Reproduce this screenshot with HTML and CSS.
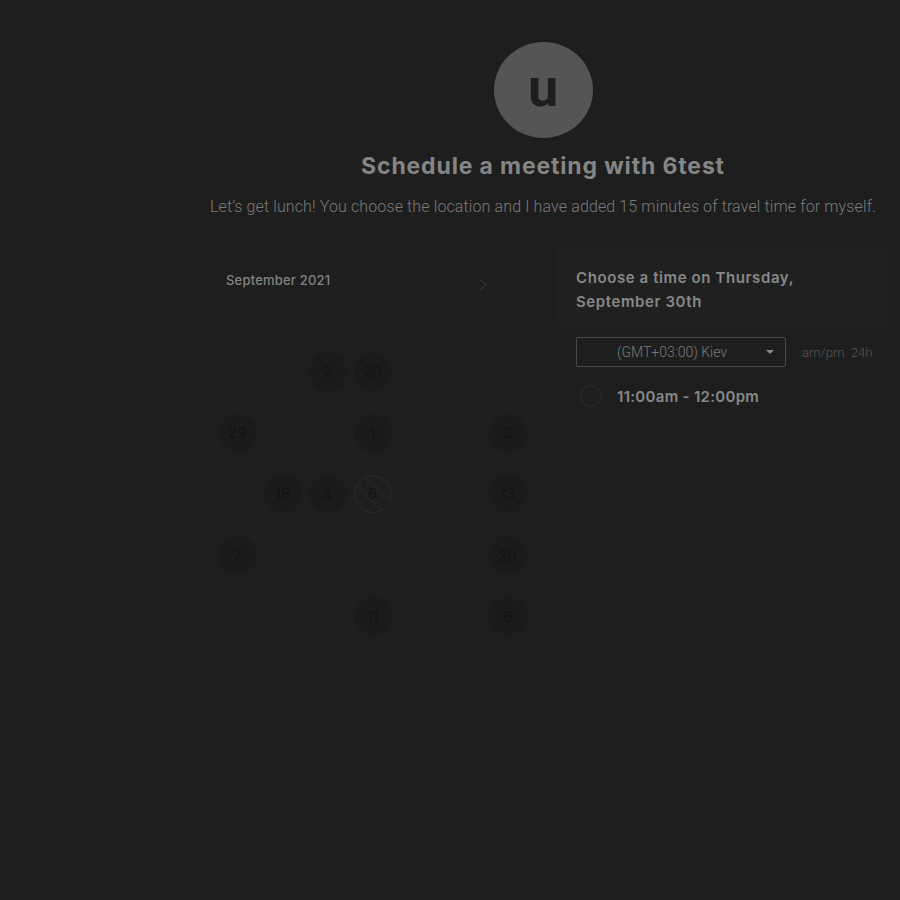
FILE: index.html
```html
<!DOCTYPE html>
<html lang="en">
<head>
<meta charset="utf-8">
<title>Schedule a meeting with 6test</title>
<link rel="stylesheet" href="styles.css">
</head>
<body>
<div class="page">
  <header class="intro">
    <div class="avatar">u</div>
    <h1 class="title">Schedule a meeting with 6test</h1>
    <p class="desc">Let’s get lunch! You choose the location and I have added 15 minutes of travel time for myself.</p>
  </header>

  <section class="booking">
    <div class="calendar">
      <div class="cal-head">
        <span class="month">September 2021</span>
        <span class="nav">
          <span class="nav-dot"></span>
          <svg class="nav-next" width="10" height="14" viewBox="0 0 10 14"><path d="M2 1.5 L8 7 L2 12.5" fill="none" stroke="currentColor" stroke-width="1.4"/></svg>
        </span>
      </div>
      <div class="weekdays">
        <span>SUN</span><span>MON</span><span>TUE</span><span>WED</span><span>THU</span><span>FRI</span><span>SAT</span>
      </div>
      <div class="days">
        <span></span><span></span><span class="day">2</span><span class="day">20</span><span></span><span></span><span></span>
        <span class="day">29</span><span></span><span class="faint">1-</span><span class="day">1</span><span></span><span class="faint">|</span><span class="day">3</span>
        <span></span><span class="day">18</span><span class="day">4</span><span class="day selected">6</span><span></span><span></span><span class="day">13</span>
        <span class="day">7</span><span></span><span></span><span></span><span></span><span></span><span class="day">26</span>
        <span></span><span class="faint">-</span><span class="faint">-</span><span class="day">11</span><span></span><span></span><span class="day">6</span>
      </div>
    </div>

    <div class="times">
      <div class="times-head">Choose a time on Thursday, September 30th</div>
      <div class="tz-row">
        <div class="tz-select">
          <span class="tz-label">(GMT+03:00) Kiev</span>
          <svg class="tz-caret" width="8" height="4" viewBox="0 0 8 4"><path d="M0 0 H8 L4 4 Z" fill="currentColor"/></svg>
        </div>
        <span class="fmt">am/pm&nbsp; 24h</span>
      </div>
      <div class="slot">
        <span class="radio"></span>
        <span class="slot-label">11:00am - 12:00pm</span>
      </div>
    </div>
  </section>
</div>
</body>
</html>
```

FILE: styles.css
```css
html, body {
  margin: 0;
  background: #1e1e1e;
  height: 100%;
}

.page {
  padding: 42px 0 0 186px;
  font-family: Inter, "Liberation Sans", sans-serif;
}

.intro {
  display: flex;
  flex-direction: column;
  align-items: center;
}

.avatar {
  width: 99px;
  height: 96px;
  border-radius: 50%;
  background: #555555;
  color: #1e1e1e;
  font-family: Roboto, sans-serif;
  font-weight: 700;
  font-size: 54px;
  display: flex;
  align-items: center;
  justify-content: center;
  line-height: 1;
  padding-bottom: 4px;
  box-sizing: border-box;
}

.title {
  margin: 14px 0 0;
  font-size: 23px;
  line-height: 28px;
  font-weight: 700;
  letter-spacing: 0.85px;
  color: #858585;
}

.desc {
  margin: 17px 0 0;
  font-family: Roboto, sans-serif;
  font-weight: 300;
  font-size: 16px;
  letter-spacing: 0.12px;
  line-height: 20px;
  color: #7a7a7a;
  white-space: nowrap;
}

.booking {
  display: flex;
  margin-top: 32px;
  padding-left: 24px;
  gap: 17px;
}

.calendar {
  width: 330px;
}

.cal-head {
  display: flex;
  align-items: center;
  justify-content: space-between;
  padding: 22px 0 0 16px;
  height: 18px;
}

.month {
  font-size: 13px;
  font-weight: 500;
  letter-spacing: 0.2px;
  color: #838383;
  line-height: 18px;
}

.nav {
  display: flex;
  align-items: center;
  gap: 65px;
  margin-right: 52px;
  margin-top: 10px;
  color: #333333;
}

.nav-dot {
  width: 2px;
  height: 2px;
  background: #252525;
}

.weekdays {
  display: grid;
  grid-template-columns: repeat(7, 45px);
  padding-left: 5px;
  margin-top: 26px;
  font-size: 13px;
  line-height: 16px;
  letter-spacing: 1px;
  color: #212121;
  text-align: center;
}

.days {
  display: grid;
  grid-template-columns: repeat(7, 45px);
  grid-auto-rows: 61.2px;
  padding-left: 5px;
  margin-top: 10px;
}

.days > span {
  display: flex;
  align-items: center;
  justify-content: center;
}

.day {
  font-size: 15px;
  color: #131313;
}

.days .day {
  width: 38px;
  height: 38px;
  border-radius: 50%;
  background: #1b1b1b;
  justify-self: center;
  align-self: center;
}

.days .selected {
  background: repeating-linear-gradient(45deg, #1b1b1b 0 1px, #242424 1px 2px);
  border: 1px solid #2a2a2a;
  box-sizing: border-box;
}

.faint {
  font-size: 12px;
  color: #232323;
}

.times {
  width: 332px;
}

.times-head {
  background: #202020;
  padding: 17px 40px 12px 19px;
  font-size: 15px;
  line-height: 24px;
  font-weight: 600;
  letter-spacing: 0.6px;
  color: #888888;
}

.tz-row {
  display: flex;
  align-items: center;
  margin: 11px 0 0 19px;
  gap: 16px;
}

.tz-select {
  width: 210px;
  height: 30px;
  box-sizing: border-box;
  border: 1px solid #4a4a4a;
  border-radius: 2px;
  display: flex;
  align-items: center;
  padding: 0 11px 0 40px;
  justify-content: space-between;
}

.tz-label {
  font-family: Roboto, sans-serif;
  font-weight: 300;
  font-size: 14px;
  color: #7a7a7a;
}

.tz-caret {
  color: #8a8a8a;
}

.fmt {
  font-family: Roboto, sans-serif;
  font-weight: 300;
  font-size: 13px;
  color: #555555;
}

.slot {
  display: flex;
  align-items: center;
  margin: 18px 0 0 23px;
  gap: 15px;
}

.radio {
  width: 22px;
  height: 22px;
  border-radius: 50%;
  border: 1px solid #2d2d2d;
  box-sizing: border-box;
}

.slot-label {
  font-size: 15px;
  font-weight: 600;
  letter-spacing: 0.3px;
  color: #888888;
}
```
